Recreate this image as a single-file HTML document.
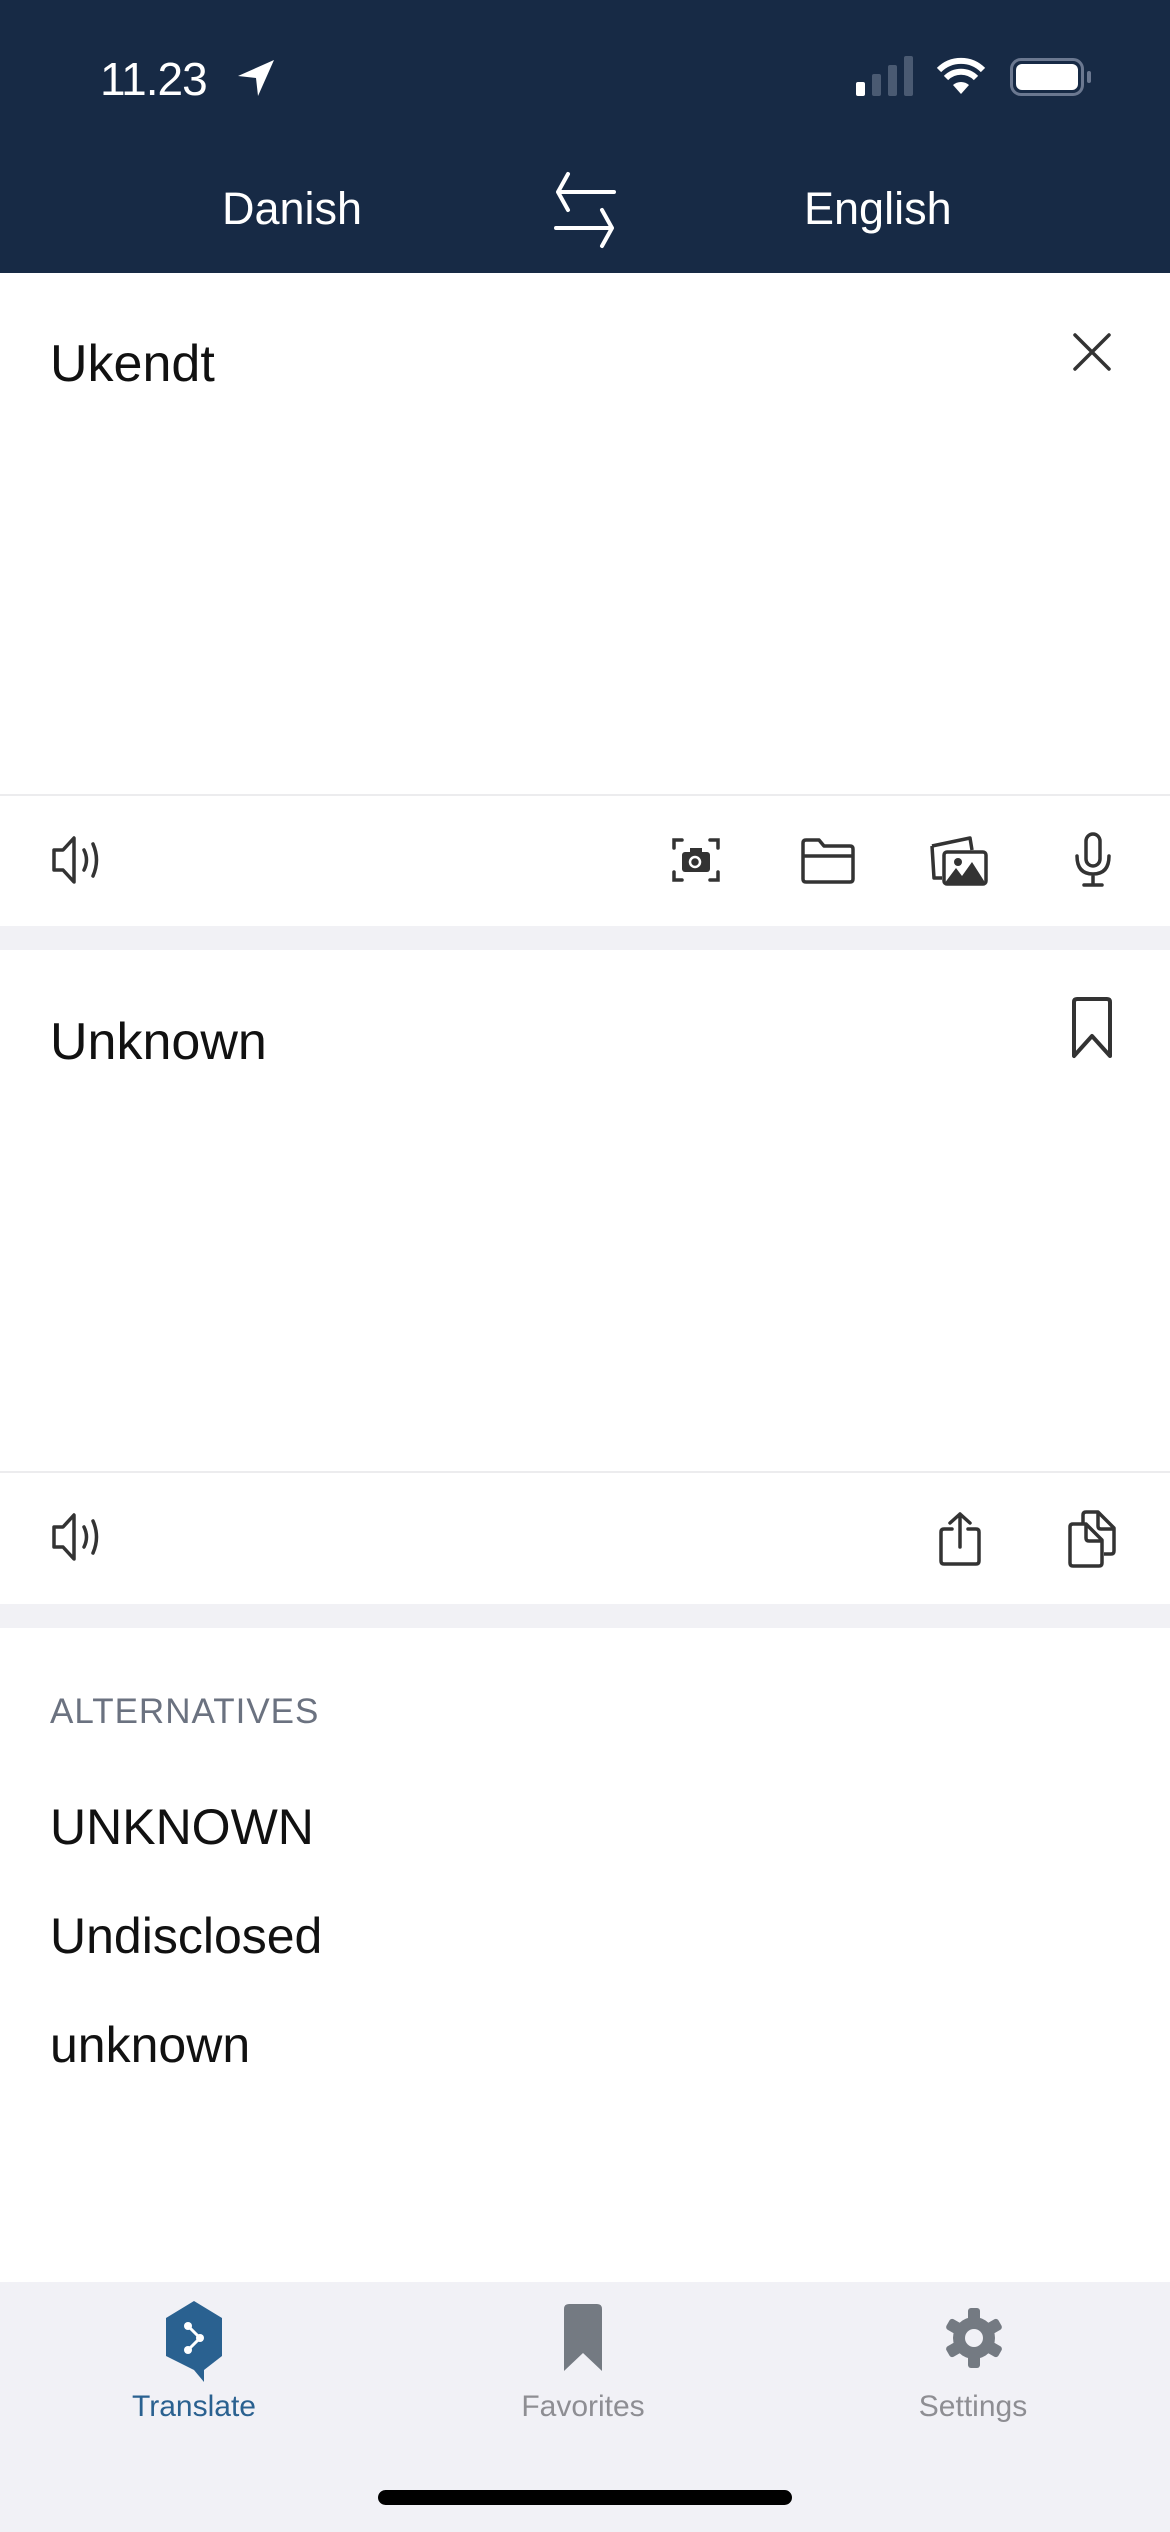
<!DOCTYPE html>
<html><head><meta charset="utf-8"><style>
*{margin:0;padding:0;box-sizing:border-box}
body{width:1170px;height:2532px;position:relative;background:#fff;font-family:"Liberation Sans",sans-serif;overflow:hidden}
.a{position:absolute}
.t{white-space:nowrap;line-height:1}
svg{position:absolute;overflow:visible}
</style></head><body>
<div class="a" style="left:0;top:0;width:1170px;height:273px;background:#172a45"></div>
<div class="a t" style="left:100px;top:56px;font-size:46px;color:#fff;letter-spacing:-1px">11.23</div>
<svg style="left:236px;top:58px" width="40" height="40" viewBox="0 0 40 40"><path d="M38 2 L2 18 L20 20 L22 38 Z" fill="#fff"/></svg>
<div class="a" style="left:856px;top:82px;width:9px;height:14px;background:#fff;border-radius:2px"></div>
<div class="a" style="left:872px;top:74px;width:9px;height:22px;background:#4a5a72;border-radius:2px"></div>
<div class="a" style="left:888px;top:65px;width:9px;height:31px;background:#4a5a72;border-radius:2px"></div>
<div class="a" style="left:904px;top:56px;width:9px;height:40px;background:#4a5a72;border-radius:2px"></div>
<svg style="left:936px;top:56px" width="50" height="40" viewBox="0 0 50 40"><path d="M25 38 L33 29 A12 12 0 0 0 17 29 Z" fill="#fff"/><path d="M10 22 A21 21 0 0 1 40 22" stroke="#fff" stroke-width="6" fill="none"/><path d="M3 14 A31 31 0 0 1 47 14" stroke="#fff" stroke-width="6" fill="none"/></svg>
<div class="a" style="left:1010px;top:58px;width:74px;height:38px;border:3px solid #6b7890;border-radius:11px"></div>
<div class="a" style="left:1016px;top:64px;width:62px;height:26px;background:#fff;border-radius:6px"></div>
<div class="a" style="left:1087px;top:71px;width:4px;height:12px;background:#6b7890;border-radius:2px"></div>
<div class="a t" style="left:222px;top:186px;font-size:45px;color:#fff">Danish</div>
<div class="a t" style="left:804px;top:186px;font-size:45px;color:#fff">English</div>
<svg style="left:554px;top:172px" width="62" height="76" viewBox="0 0 62 76"><path d="M60 20 H4 M14 2 L4 20 L14 38 M2 56 H58 M48 38 L58 56 L48 74" stroke="#fff" stroke-width="4" fill="none" stroke-linecap="round" stroke-linejoin="round"/></svg>

<div class="a t" style="left:50px;top:338px;font-size:52px;color:#111">Ukendt</div>
<svg style="left:1073px;top:333px" width="38" height="38"><path d="M2 2 L36 36 M36 2 L2 36" stroke="#333" stroke-width="3.5" stroke-linecap="round"/></svg>
<div class="a" style="left:0;top:794px;width:1170px;height:2px;background:#ececee"></div>
<svg style="left:52px;top:836px" width="56" height="48" viewBox="0 0 56 48"><path d="M2 14 H11 L22 2 V46 L11 34 H2 Z" stroke="#333" stroke-width="3.5" fill="none" stroke-linejoin="round"/><path d="M32 14 Q37 24 32 34 M41 8 Q48 24 41 40" stroke="#333" stroke-width="3.5" fill="none" stroke-linecap="round"/></svg>
<svg style="left:672px;top:836px" width="48" height="48" viewBox="0 0 48 48"><path d="M2 12 V4 H10 M38 4 H46 V12 M46 36 V44 H38 M10 44 H2 V36" stroke="#333" stroke-width="3.5" fill="none" stroke-linecap="round"/><rect x="10" y="16" width="28" height="20" rx="3" fill="#333"/><rect x="18" y="12" width="12" height="6" fill="#333"/><circle cx="23" cy="26" r="5" stroke="#fff" stroke-width="2.5" fill="none"/></svg>
<svg style="left:800px;top:838px" width="56" height="46" viewBox="0 0 56 46"><path d="M3 5 Q3 2 6 2 H19 L24 8 H50 Q53 8 53 11 V41 Q53 44 50 44 H6 Q3 44 3 41 Z M3 18 H53" stroke="#333" stroke-width="3.5" fill="none" stroke-linejoin="round"/></svg>
<svg style="left:928px;top:834px" width="62" height="52" viewBox="0 0 62 52"><path d="M4 12 L42 4 L44 16" stroke="#333" stroke-width="3.5" fill="none" stroke-linejoin="round"/><path d="M4 12 L6 44 L14 44" stroke="#333" stroke-width="3.5" fill="none" stroke-linejoin="round"/><rect x="16" y="18" width="42" height="32" rx="3" stroke="#333" stroke-width="3.5" fill="#fff"/><path d="M16 50 L28 34 L34 42 L44 28 L58 50 Z" fill="#333"/><circle cx="30" cy="28" r="4" fill="#333"/></svg>
<svg style="left:1073px;top:832px" width="40" height="56" viewBox="0 0 40 56"><rect x="13" y="2" width="14" height="32" rx="7" stroke="#333" stroke-width="3.5" fill="none"/><path d="M4 24 Q4 42 20 42 Q36 42 36 24 M20 42 V53 M11 53 H29" stroke="#333" stroke-width="3.5" fill="none" stroke-linecap="round"/></svg>
<div class="a" style="left:0;top:926px;width:1170px;height:24px;background:#f1f1f5"></div>

<div class="a t" style="left:50px;top:1016px;font-size:52px;color:#111">Unknown</div>
<svg style="left:1070px;top:996px" width="44" height="64" viewBox="0 0 44 64"><path d="M4 6 Q4 3 7 3 H37 Q40 3 40 6 V60 L22 40 L4 60 Z" stroke="#333" stroke-width="4" fill="none" stroke-linejoin="round"/></svg>
<div class="a" style="left:0;top:1471px;width:1170px;height:2px;background:#ececee"></div>
<svg style="left:52px;top:1513px" width="56" height="48" viewBox="0 0 56 48"><path d="M2 14 H11 L22 2 V46 L11 34 H2 Z" stroke="#333" stroke-width="3.5" fill="none" stroke-linejoin="round"/><path d="M32 14 Q37 24 32 34 M41 8 Q48 24 41 40" stroke="#333" stroke-width="3.5" fill="none" stroke-linecap="round"/></svg>
<svg style="left:938px;top:1511px" width="44" height="56" viewBox="0 0 44 56"><path d="M14 18 H6 Q3 18 3 21 V50 Q3 53 6 53 H38 Q41 53 41 50 V21 Q41 18 38 18 H30 M22 36 V3 M12 12 L22 3 L32 12" stroke="#333" stroke-width="3.5" fill="none" stroke-linecap="round" stroke-linejoin="round"/></svg>
<svg style="left:1067px;top:1509px" width="50" height="60" viewBox="0 0 50 60"><path d="M16 14 V6 Q16 3 19 3 H31 L47 19 V42 Q47 45 44 45 H37 M31 3 V17 Q31 20 34 20 H47" stroke="#333" stroke-width="3.5" fill="none" stroke-linejoin="round"/><path d="M3 18 Q3 15 6 15 H19 L35 31 V54 Q35 57 32 57 H6 Q3 57 3 54 Z M19 15 V29 Q19 32 22 32 H35" stroke="#333" stroke-width="3.5" fill="#fff" stroke-linejoin="round"/></svg>
<div class="a" style="left:0;top:1604px;width:1170px;height:24px;background:#f1f1f5"></div>

<div class="a t" style="left:50px;top:1694px;font-size:35px;color:#6b7280;letter-spacing:1px">ALTERNATIVES</div>
<div class="a t" style="left:50px;top:1802px;font-size:50px;color:#111">UNKNOWN</div>
<div class="a t" style="left:50px;top:1911px;font-size:50px;color:#111">Undisclosed</div>
<div class="a t" style="left:50px;top:2020px;font-size:50px;color:#111">unknown</div>

<div class="a" style="left:0;top:2282px;width:1170px;height:250px;background:#f1f1f6"></div>
<svg style="left:164px;top:2300px" width="60" height="82" viewBox="0 0 60 82"><path d="M30 1 L58 18 V56 L40 70 V82 L30 70 L2 56 V18 Z" fill="#2a6190"/><path d="M24 26 L36 38 L24 50" stroke="#fff" stroke-width="3" fill="none"/><circle cx="24" cy="26" r="4" fill="#fff"/><circle cx="36" cy="38" r="4" fill="#fff"/><circle cx="24" cy="50" r="4" fill="#fff"/></svg>
<div class="a t" style="left:194px;top:2392px;font-size:30px;color:#2a6190;transform:translateX(-50%)">Translate</div>
<svg style="left:562px;top:2303px" width="42" height="70" viewBox="0 0 42 70"><path d="M2 6 Q2 1 7 1 H35 Q40 1 40 6 V68 L21 50 L2 68 Z" fill="#747a82"/></svg>
<div class="a t" style="left:583px;top:2392px;font-size:30px;color:#8e8e93;transform:translateX(-50%)">Favorites</div>
<svg style="left:943px;top:2307px" width="62" height="62" viewBox="0 0 62 62"><g fill="#747a82"><circle cx="31" cy="31" r="21"/><rect x="25" y="1" width="12" height="60" rx="3"/><rect x="25" y="1" width="12" height="60" rx="3" transform="rotate(60 31 31)"/><rect x="25" y="1" width="12" height="60" rx="3" transform="rotate(120 31 31)"/></g><circle cx="31" cy="31" r="9" fill="#f1f1f6"/></svg>
<div class="a t" style="left:973px;top:2392px;font-size:30px;color:#8e8e93;transform:translateX(-50%)">Settings</div>
<div class="a" style="left:378px;top:2490px;width:414px;height:15px;background:#000;border-radius:8px"></div>
</body></html>
